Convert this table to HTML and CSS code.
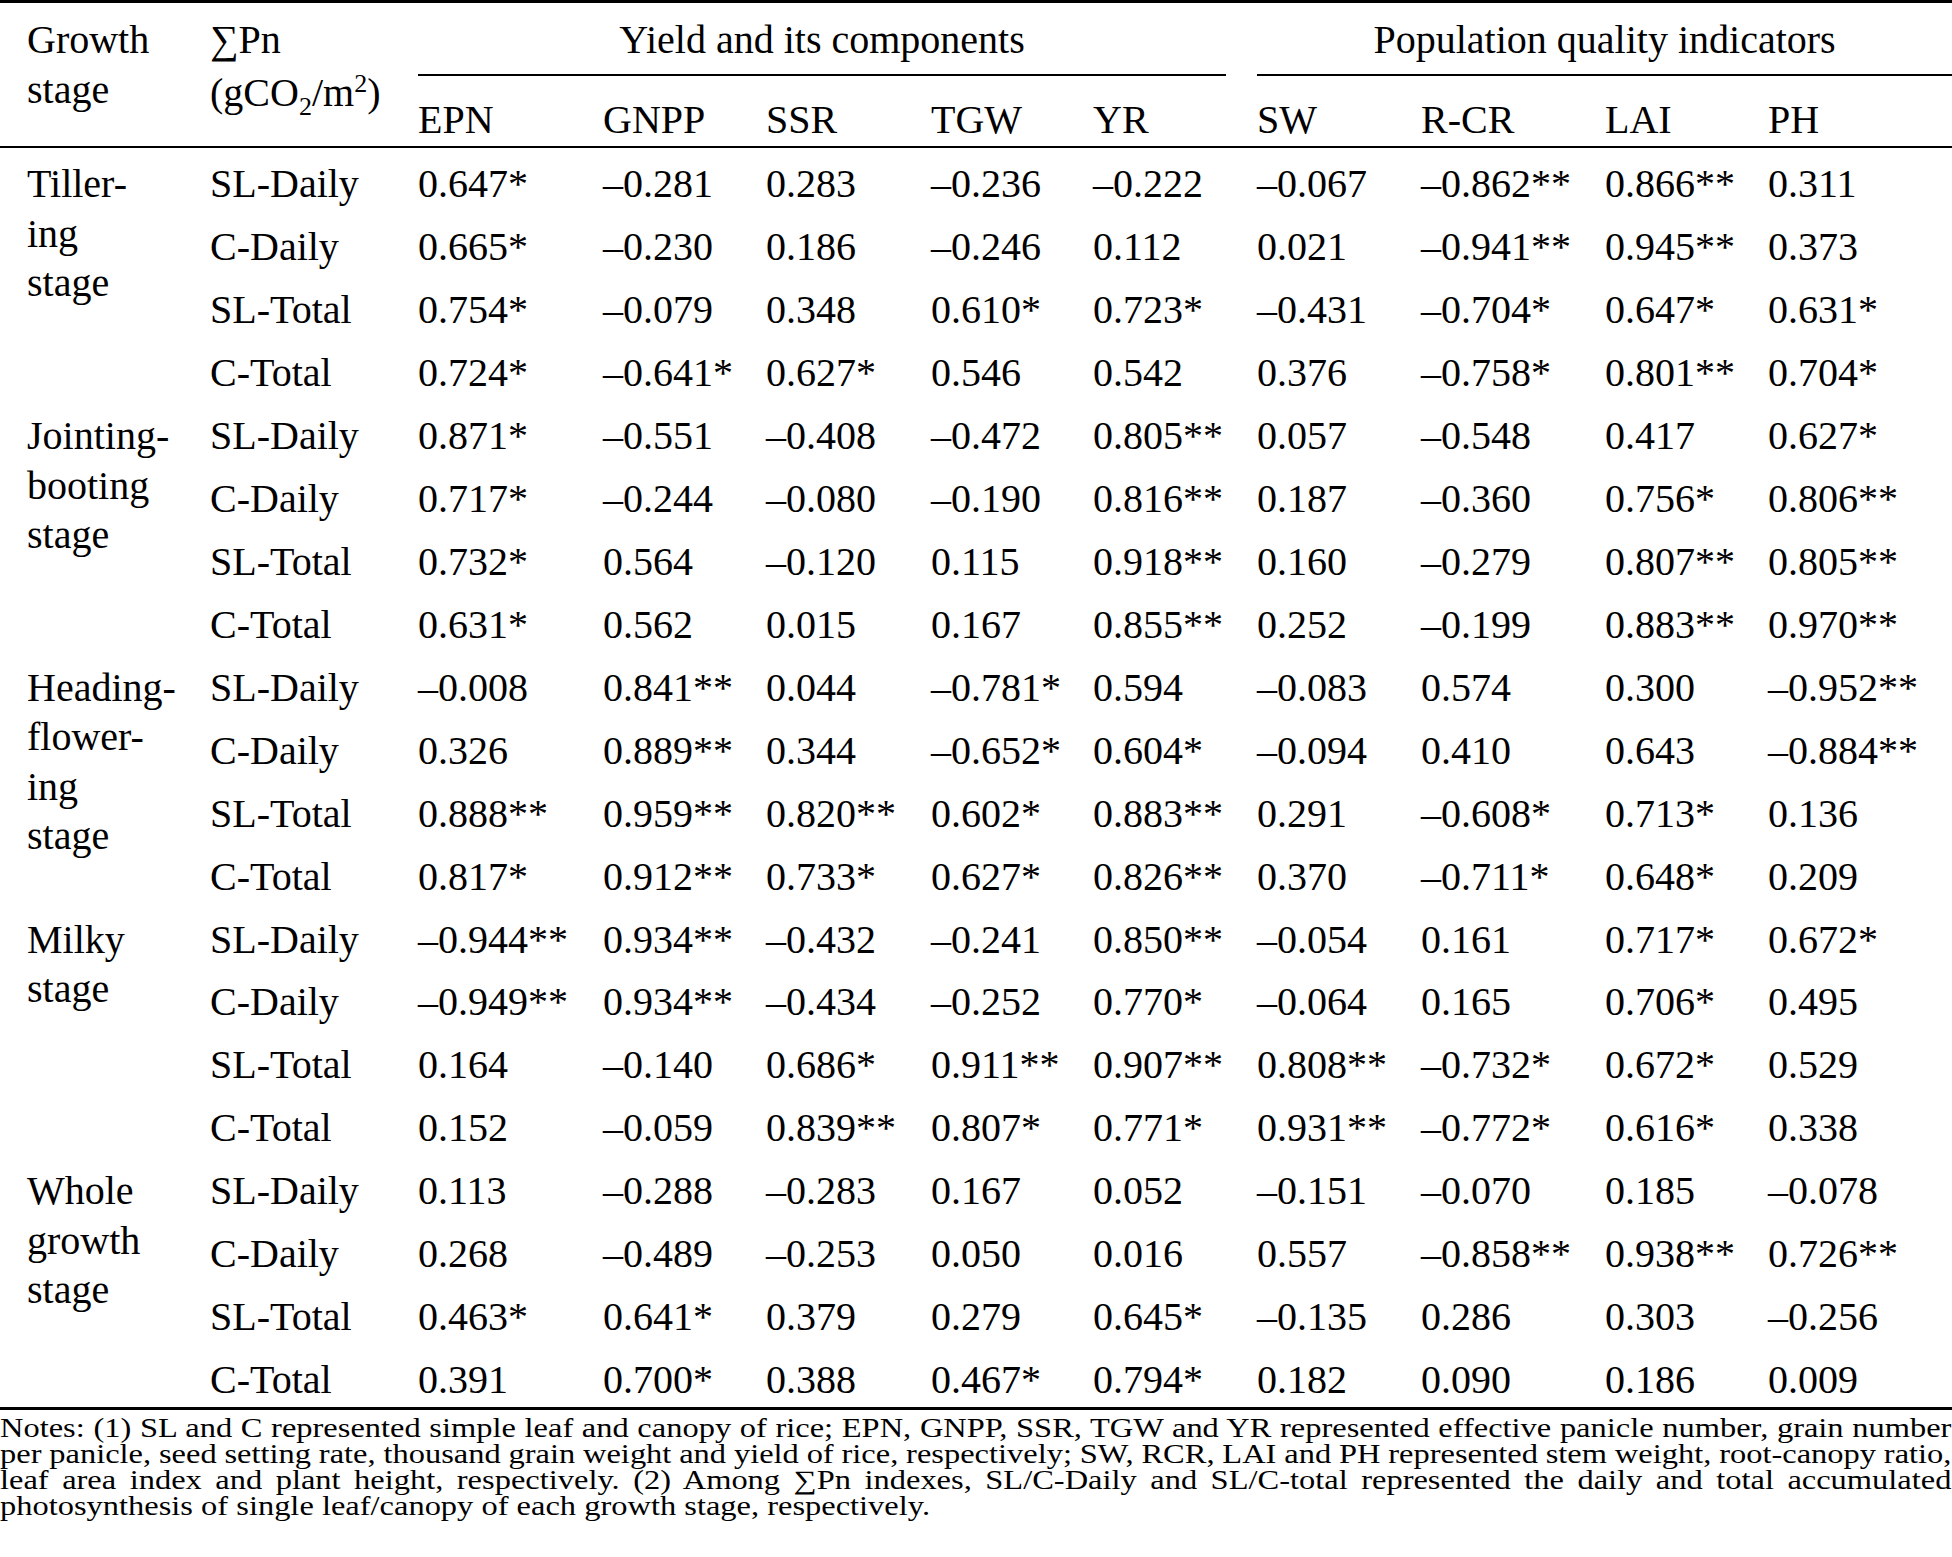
FILE: index.html
```html
<!DOCTYPE html>
<html>
<head>
<meta charset="utf-8">
<link rel="stylesheet" href="styles.css">
</head>
<body>
<div class="page">
<table class="tbl">
<colgroup>
<col class="c-stage"><col class="c-pn"><col class="c-epn"><col class="c-gnpp"><col class="c-ssr"><col class="c-tgw"><col class="c-yr"><col class="c-sw"><col class="c-rcr"><col class="c-lai"><col class="c-ph">
</colgroup>
<thead>
<tr class="h1">
<th rowspan="2" class="hs stage">Growth<br>stage</th>
<th rowspan="2" class="hs pn">∑Pn<div class="unit">(gCO<sub>2</sub>/m<sup>2</sup>)</div></th>
<th colspan="5" class="grp grp-yield"><div class="grp-line">Yield and its components</div></th>
<th colspan="4" class="grp grp-pop"><div class="grp-line">Population quality indicators</div></th>
</tr>
<tr class="h2">
<th>EPN</th><th>GNPP</th><th>SSR</th><th>TGW</th><th>YR</th><th>SW</th><th>R-CR</th><th>LAI</th><th>PH</th>
</tr>
</thead>
<tbody>
<tr><td rowspan="4" class="stage">Tiller-<br>ing<br>stage</td><td>SL-Daily</td><td>0.647*</td><td>–0.281</td><td>0.283</td><td>–0.236</td><td>–0.222</td><td>–0.067</td><td>–0.862**</td><td>0.866**</td><td>0.311</td></tr>
<tr><td>C-Daily</td><td>0.665*</td><td>–0.230</td><td>0.186</td><td>–0.246</td><td>0.112</td><td>0.021</td><td>–0.941**</td><td>0.945**</td><td>0.373</td></tr>
<tr><td>SL-Total</td><td>0.754*</td><td>–0.079</td><td>0.348</td><td>0.610*</td><td>0.723*</td><td>–0.431</td><td>–0.704*</td><td>0.647*</td><td>0.631*</td></tr>
<tr><td>C-Total</td><td>0.724*</td><td>–0.641*</td><td>0.627*</td><td>0.546</td><td>0.542</td><td>0.376</td><td>–0.758*</td><td>0.801**</td><td>0.704*</td></tr>

<tr><td rowspan="4" class="stage">Jointing-<br>booting<br>stage</td><td>SL-Daily</td><td>0.871*</td><td>–0.551</td><td>–0.408</td><td>–0.472</td><td>0.805**</td><td>0.057</td><td>–0.548</td><td>0.417</td><td>0.627*</td></tr>
<tr><td>C-Daily</td><td>0.717*</td><td>–0.244</td><td>–0.080</td><td>–0.190</td><td>0.816**</td><td>0.187</td><td>–0.360</td><td>0.756*</td><td>0.806**</td></tr>
<tr><td>SL-Total</td><td>0.732*</td><td>0.564</td><td>–0.120</td><td>0.115</td><td>0.918**</td><td>0.160</td><td>–0.279</td><td>0.807**</td><td>0.805**</td></tr>
<tr><td>C-Total</td><td>0.631*</td><td>0.562</td><td>0.015</td><td>0.167</td><td>0.855**</td><td>0.252</td><td>–0.199</td><td>0.883**</td><td>0.970**</td></tr>

<tr><td rowspan="4" class="stage">Heading-<br>flower-<br>ing<br>stage</td><td>SL-Daily</td><td>–0.008</td><td>0.841**</td><td>0.044</td><td>–0.781*</td><td>0.594</td><td>–0.083</td><td>0.574</td><td>0.300</td><td>–0.952**</td></tr>
<tr><td>C-Daily</td><td>0.326</td><td>0.889**</td><td>0.344</td><td>–0.652*</td><td>0.604*</td><td>–0.094</td><td>0.410</td><td>0.643</td><td>–0.884**</td></tr>
<tr><td>SL-Total</td><td>0.888**</td><td>0.959**</td><td>0.820**</td><td>0.602*</td><td>0.883**</td><td>0.291</td><td>–0.608*</td><td>0.713*</td><td>0.136</td></tr>
<tr><td>C-Total</td><td>0.817*</td><td>0.912**</td><td>0.733*</td><td>0.627*</td><td>0.826**</td><td>0.370</td><td>–0.711*</td><td>0.648*</td><td>0.209</td></tr>

<tr><td rowspan="4" class="stage">Milky<br>stage</td><td>SL-Daily</td><td>–0.944**</td><td>0.934**</td><td>–0.432</td><td>–0.241</td><td>0.850**</td><td>–0.054</td><td>0.161</td><td>0.717*</td><td>0.672*</td></tr>
<tr><td>C-Daily</td><td>–0.949**</td><td>0.934**</td><td>–0.434</td><td>–0.252</td><td>0.770*</td><td>–0.064</td><td>0.165</td><td>0.706*</td><td>0.495</td></tr>
<tr><td>SL-Total</td><td>0.164</td><td>–0.140</td><td>0.686*</td><td>0.911**</td><td>0.907**</td><td>0.808**</td><td>–0.732*</td><td>0.672*</td><td>0.529</td></tr>
<tr><td>C-Total</td><td>0.152</td><td>–0.059</td><td>0.839**</td><td>0.807*</td><td>0.771*</td><td>0.931**</td><td>–0.772*</td><td>0.616*</td><td>0.338</td></tr>

<tr><td rowspan="4" class="stage">Whole<br>growth<br>stage</td><td>SL-Daily</td><td>0.113</td><td>–0.288</td><td>–0.283</td><td>0.167</td><td>0.052</td><td>–0.151</td><td>–0.070</td><td>0.185</td><td>–0.078</td></tr>
<tr><td>C-Daily</td><td>0.268</td><td>–0.489</td><td>–0.253</td><td>0.050</td><td>0.016</td><td>0.557</td><td>–0.858**</td><td>0.938**</td><td>0.726**</td></tr>
<tr><td>SL-Total</td><td>0.463*</td><td>0.641*</td><td>0.379</td><td>0.279</td><td>0.645*</td><td>–0.135</td><td>0.286</td><td>0.303</td><td>–0.256</td></tr>
<tr><td>C-Total</td><td>0.391</td><td>0.700*</td><td>0.388</td><td>0.467*</td><td>0.794*</td><td>0.182</td><td>0.090</td><td>0.186</td><td>0.009</td></tr>
</tbody>
</table>
<div class="notes">
<span class="nl just">Notes: (1) SL and C represented simple leaf and canopy of rice; EPN, GNPP, SSR, TGW and YR represented effective panicle number, grain number</span>
<span class="nl just">per panicle, seed setting rate, thousand grain weight and yield of rice, respectively; SW, RCR, LAI and PH represented stem weight, root-canopy ratio,</span>
<span class="nl just">leaf area index and plant height, respectively. (2) Among ∑Pn indexes, SL/C-Daily and SL/C-total represented the daily and total accumulated</span>
<span class="nl">photosynthesis of single leaf/canopy of each growth stage, respectively.</span>
</div>
</div>
</body>
</html>
```
FILE: styles.css
```css
html, body {
  margin: 0;
  padding: 0;
  background: #ffffff;
}
body {
  width: 1952px;
  height: 1557px;
  overflow: hidden;
  font-family: "Liberation Serif", "Times New Roman", serif;
  color: #000000;
}
.page {
  width: 1952px;
}
.tbl {
  width: 1952px;
  table-layout: fixed;
  border-collapse: separate;
  border-spacing: 0;
  border-top: 3px solid #000;
  border-bottom: 3px solid #000;
  font-size: 40px;
  line-height: 49.5px;
}
.c-stage { width: 210px; }
.c-pn { width: 208px; }
.c-epn { width: 185px; }
.c-gnpp { width: 163px; }
.c-ssr { width: 165px; }
.c-tgw { width: 162px; }
.c-yr { width: 164px; }
.c-sw { width: 164px; }
.c-rcr { width: 184px; }
.c-lai { width: 163px; }
.c-ph { width: 184px; }

th, td {
  padding: 0;
  text-align: left;
  font-weight: normal;
  vertical-align: top;
  white-space: nowrap;
}
.stage {
  padding-left: 27px;
}
.hs {
  padding-top: 12px;
  border-bottom: 2px solid #000;
}
.unit {
  padding-top: 3px;
}
.unit sub, .unit sup {
  font-size: 26px;
  line-height: 0;
}
.grp {
  padding-top: 12px;
}
.grp-yield {
  padding-right: 31px;
}
.grp-line {
  text-align: center;
  padding-bottom: 9.5px;
  border-bottom: 2px solid #000;
}
.h2 th {
  padding-top: 18.8px;
  padding-bottom: 1.7px;
  border-bottom: 2px solid #000;
}
tbody td {
  padding-top: 11.3px;
  padding-bottom: 2.15px;
}
tbody td.stage {
  padding-left: 27px;
}
.notes {
  width: 1593px;
  transform: scaleX(1.225);
  transform-origin: 0 0;
  font-size: 26.5px;
  line-height: 26px;
  padding-top: 5px;
}
.nl {
  display: block;
  white-space: nowrap;
}
.just {
  text-align: justify;
  text-align-last: justify;
  word-spacing: -2px;
}
```
